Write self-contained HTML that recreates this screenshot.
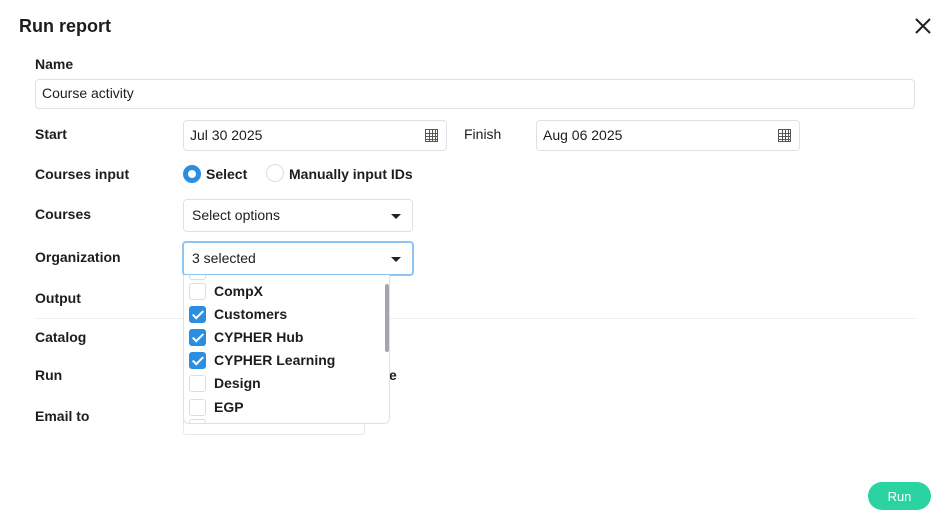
<!DOCTYPE html>
<html><head><style>
*{box-sizing:border-box;margin:0;padding:0}
body{width:950px;height:529px;background:#fff;font-family:"Liberation Sans",sans-serif;color:#1d1d1f;position:relative;overflow:hidden;font-size:14px}
.a{position:absolute}
.lbl{font-weight:bold;font-size:14px;line-height:16px}
.inp{position:absolute;border:1px solid #e0e0ea;border-radius:4px;background:#fff;font-size:14px;padding-left:7px;display:flex;align-items:center;padding-bottom:2px}
.cal{position:absolute;right:8px;top:8px;width:13px;height:13px;border:1px solid #555;background:
linear-gradient(#555,#555) 0 3px/100% 1px no-repeat,
linear-gradient(#555,#555) 0 6px/100% 1px no-repeat,
linear-gradient(#555,#555) 0 9px/100% 1px no-repeat,
linear-gradient(#555,#555) 3px 0/1px 100% no-repeat,
linear-gradient(#555,#555) 6px 0/1px 100% no-repeat,
linear-gradient(#555,#555) 9px 0/1px 100% no-repeat}
.caret{position:absolute;right:11px;top:14px;width:0;height:0;border-left:5px solid transparent;border-right:5px solid transparent;border-top:5px solid #222}
.it{position:absolute;left:0;height:20px;display:flex;align-items:center;font-weight:bold;font-size:14px}
.cb{width:17px;height:17px;border:1px solid #dcdce4;border-radius:3px;margin-left:5px;margin-right:8px;background:#fff;position:relative}
.cb.on{background:#2b8ee0;border-color:#2b8ee0}
.cb.on:after{content:"";position:absolute;left:5px;top:1px;width:4px;height:9px;border:solid #fff;border-width:0 2px 2px 0;transform:rotate(45deg)}
</style></head><body>
<div class="a" style="left:19px;top:16px;font-size:18px;font-weight:bold">Run report</div>
<svg class="a" style="left:915px;top:18px" width="16" height="16"><path d="M1 1L15 15M15 1L1 15" stroke="#222" stroke-width="2"/></svg>

<div class="a lbl" style="left:35px;top:56px">Name</div>
<div class="inp" style="left:35px;top:79px;width:880px;height:30px;padding-left:6px">Course activity</div>

<div class="a lbl" style="left:35px;top:126px">Start</div>
<div class="inp" style="left:183px;top:120px;width:264px;height:31px;padding-left:6px">Jul 30 2025<div class="cal"></div></div>
<div class="a" style="left:464px;top:126px">Finish</div>
<div class="inp" style="left:536px;top:120px;width:264px;height:31px;padding-left:6px">Aug 06 2025<div class="cal"></div></div>

<div class="a lbl" style="left:35px;top:166px">Courses input</div>
<div class="a" style="left:183px;top:165px;width:18px;height:18px;border-radius:50%;border:5px solid #2b8ee0;background:#fff"></div>
<div class="a lbl" style="left:206px;top:166px">Select</div>
<div class="a" style="left:266px;top:164px;width:18px;height:18px;border-radius:50%;border:1px solid #dcdce4"></div>
<div class="a lbl" style="left:289px;top:166px">Manually input IDs</div>

<div class="a lbl" style="left:35px;top:206px">Courses</div>
<div class="inp" style="left:183px;top:199px;width:230px;height:33px;padding-left:8px">Select options<div class="caret"></div></div>

<div class="a lbl" style="left:35px;top:249px">Organization</div>
<div class="inp" style="left:182px;top:241px;width:232px;height:35px;border:2px solid #8ec4f2;padding-left:8px">3 selected<div class="caret"></div></div>

<div class="a lbl" style="left:35px;top:290px">Output</div>
<div class="a" style="left:35px;top:318px;width:880px;height:1px;background:#ececf2"></div>
<div class="a lbl" style="left:35px;top:329px">Catalog</div>
<div class="a lbl" style="left:35px;top:367px">Run</div>
<div class="a lbl" style="left:389px;top:367px">e</div>
<div class="a lbl" style="left:35px;top:408px">Email to</div>
<div class="a" style="left:183px;top:405px;width:182px;height:30px;border:1px solid #e6e6ee;border-radius:3px"></div>

<div class="a" style="left:183px;top:275px;width:207px;height:149px;background:#fff;border:1px solid #e0e0ea;border-top:none;border-radius:0 0 6px 6px;overflow:hidden">
<div class="cb" style="position:absolute;left:0;top:-12px"></div>
<div class="it" style="top:6px"><div class="cb"></div>CompX</div>
<div class="it" style="top:29px"><div class="cb on"></div>Customers</div>
<div class="it" style="top:52px"><div class="cb on"></div>CYPHER Hub</div>
<div class="it" style="top:75px"><div class="cb on"></div>CYPHER Learning</div>
<div class="it" style="top:98px"><div class="cb"></div>Design</div>
<div class="it" style="top:122px"><div class="cb"></div>EGP</div>
<div class="cb" style="position:absolute;left:0;top:144px"></div>
<div class="a" style="left:201px;top:9px;width:4px;height:68px;background:#a4a4b4;border-radius:2px"></div>
</div>

<div class="a" style="left:868px;top:482px;width:63px;height:28px;background:#2bd3a3;border-radius:14px;color:#fff;font-size:13px;display:flex;align-items:center;justify-content:center">Run</div>
</body></html>
